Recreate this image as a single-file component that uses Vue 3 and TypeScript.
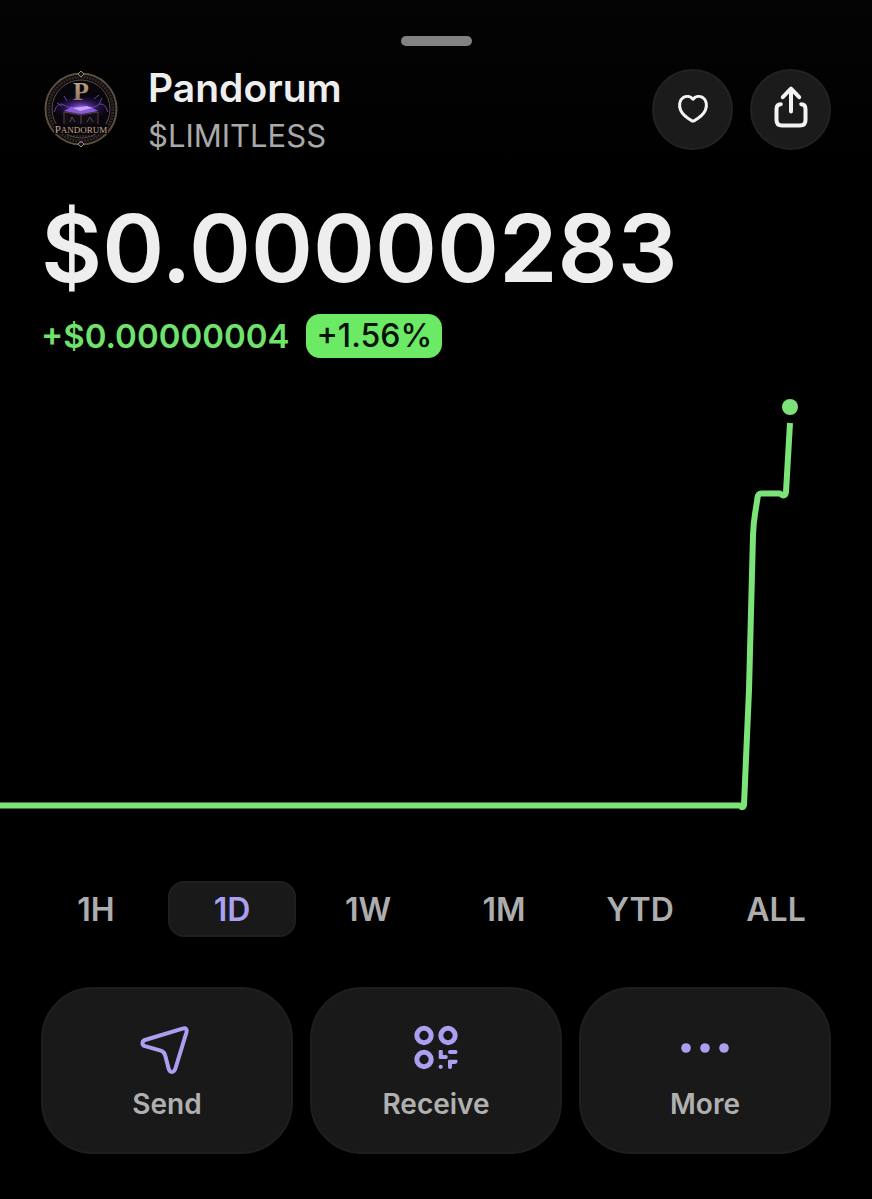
<script setup lang="ts">
import { ref } from 'vue'

const periods: string[] = ['1H', '1D', '1W', '1M', 'YTD', 'ALL']
const selected = ref('1D')
const favourite = ref(false)
</script>

<template>
  <main class="sheet">
    <div class="handle"></div>

    <header class="header">
      <svg class="avatar" viewBox="0 0 76 78" role="img" aria-label="Pandorum logo">
        <defs>
          <radialGradient id="glow">
            <stop offset="0" stop-color="#a070f0" />
            <stop offset="0.4" stop-color="#5a2fa3" stop-opacity="0.75" />
            <stop offset="1" stop-color="#1c0c36" stop-opacity="0" />
          </radialGradient>
          <linearGradient id="gold" x1="0" y1="0" x2="0" y2="1">
            <stop offset="0" stop-color="#c9b08e" />
            <stop offset="1" stop-color="#7d6855" />
          </linearGradient>
        </defs>
        <circle cx="38" cy="39" r="35.5" fill="#0b0910" stroke="#5d4f3e" stroke-width="2" />
        <circle cx="38" cy="39" r="32" fill="none" stroke="#302823" stroke-width="3" stroke-dasharray="2 1" />
        <circle cx="38" cy="39" r="29" fill="#08060d" stroke="#5b4e3d" />
        <ellipse cx="38" cy="38" rx="28" ry="13" fill="url(#glow)" />
        <path d="M11 42q4-11 10-7t8 1M65 42q-4-11-10-7t-8 1M14 33l5 3M59 28l-3 6M21 26l3 5M51 29l5-4" fill="none" stroke="#6940a9" />
        <path d="M21 42l17 3 17-3v13H21z" fill="#110d16" stroke="#54423a" />
        <path d="M38 45v10M27 52l2-5 3 5M44 52l3-5 3 5" fill="none" stroke="#5f4b3c" />
        <path d="M21 41l7-4h20l7 4-17 3z" fill="#8a5bd6" />
        <path d="M30 38l14-2 5 2-12 3z" fill="#c9a5ff" />
        <text x="38" y="30" class="logo-initial">P</text>
        <rect x="11" y="54" width="54" height="10" fill="#0a070e" />
        <text x="38" y="63" class="logo-name"><tspan class="logo-cap">P</tspan>ANDORUM</text>
        <path d="M24 66h28" stroke="#4c4239" stroke-dasharray="2 1" />
        <path d="M38 1l3 3-3 3-3-3zM38 71l3 3-3 3-3-3z" fill="#17120f" stroke="#a48b68" />
        <circle cx="38" cy="72" r="1" fill="#8750d0" />
      </svg>

      <div class="identity">
        <h1 class="name">Pandorum</h1>
        <p class="ticker">$LIMITLESS</p>
      </div>

      <button class="round" type="button" aria-label="Add to favourites" :aria-pressed="favourite" @click="favourite = !favourite">
        <svg class="icon heart" viewBox="0 0 48 48" aria-hidden="true">
          <path d="M24 14.2C21.5 11.2 17.5 10.6 14.3 12.6C10.5 15 9.6 20.5 11.6 25.2C13.6 29.8 18.5 33.3 22.6 35.6Q24 36.4 25.4 35.6C29.5 33.3 34.4 29.8 36.4 25.2C38.4 20.5 37.5 15 33.7 12.6C30.5 10.6 26.5 11.2 24 14.2Z" />
        </svg>
      </button>
      <button class="round" type="button" aria-label="Share">
        <svg class="icon" viewBox="0 0 48 48" aria-hidden="true">
          <path d="M13.8 19.2Q9.5 19.4 9.5 24V35Q9.5 40.5 15 40.5H33Q38.5 40.5 38.5 35V24Q38.5 19.4 34.2 19.2M24 26.5V4M15.8 12.2L24 3.7L32.2 12.2" />
        </svg>
      </button>
    </header>

    <section class="quote" aria-label="Price">
      <p class="price">$0.00000283</p>
      <p class="change">
        <span>+$0.00000004</span>
        <span class="badge">+1.56%</span>
      </p>
    </section>

    <svg class="chart" viewBox="0 0 872 450" role="img" aria-label="Price chart, one day">
      <path d="M0 425.5H740Q743 429 744 425L749 310L753 155Q753.5 143 755 134L757.5 118Q758 113 762 113.5H780Q785 118 786 112L790 43" />
      <circle cx="790" cy="27" r="8" />
    </svg>

    <nav class="periods" aria-label="Chart period">
      <button
        v-for="period in periods"
        :key="period"
        type="button"
        class="period"
        :class="{ active: period === selected }"
        :aria-pressed="period === selected"
        @click="selected = period"
      >{{ period }}</button>
    </nav>

    <div class="actions">
      <button class="action" type="button">
        <svg class="icon" viewBox="0 0 48 48" aria-hidden="true">
          <path d="M2 16L39.5 4.6Q44.7 3.3 43.4 8.5L32.4 44.5C31 49 26.8 49 25.6 44.5L22.2 31.5Q21.3 27.7 17.8 26.7L2 22.2C-1.3 21.1 -1.3 17.2 2 16Z" />
        </svg>
        <span>Send</span>
      </button>
      <button class="action" type="button">
        <svg class="icon" viewBox="0 0 48 48" aria-hidden="true">
          <g class="rings">
            <circle cx="12" cy="11.5" r="7.2" />
            <circle cx="36" cy="11.5" r="7.2" />
            <circle cx="12" cy="35.5" r="7.2" />
          </g>
          <path class="fill" d="M28 26h1.5q1.3 0 1.3 1.3V31h3q2 0 2 2t-2 2H28q-1.3 0-1.3-1.3v-6.4Q26.7 26 28 26ZM38 26h5.5q2 0 2 2t-2 2H38q-2 0-2-2t2-2ZM37.3 35.7H44.500q1 0 1 1.3 0 3-3 3H40v3q0 2-2 2t-2-2v-6q0-1.3 1.3-1.3Z" />
          <circle class="fill" cx="28.7" cy="42.8" r="2.1" />
        </svg>
        <span>Receive</span>
      </button>
      <button class="action" type="button">
        <svg class="icon" viewBox="0 0 48 48" aria-hidden="true">
          <g class="fill">
            <circle cx="5" cy="24" r="4.8" />
            <circle cx="24" cy="24" r="4.8" />
            <circle cx="43" cy="24" r="4.8" />
          </g>
        </svg>
        <span>More</span>
      </button>
    </div>
  </main>
</template>

<style>
body {
  margin: 0;
  background: #000;
}
</style>

<style scoped>
.sheet {
  box-sizing: border-box;
  display: flex;
  flex-direction: column;
  min-height: 100vh;
  padding: 36px 0 46px;
  background: linear-gradient(#040404, #000 168px);
  color: #eee;
  font-family: Inter, "Liberation Sans", sans-serif;
}

h1,
p {
  margin: 0;
}

button {
  box-sizing: border-box;
  padding: 0;
  font: inherit;
  cursor: pointer;
}

.handle {
  width: 71px;
  height: 10px;
  border-radius: 5px;
  background: #828282;
  align-self: center;
}

.header {
  display: flex;
  align-items: center;
  gap: 17px;
  margin-top: 12px;
  padding: 0 41px;
}

.avatar {
  width: 76px;
  height: 78px;
  margin: 0 2px;
  flex: none;
}

.logo-initial {
  fill: url(#gold);
  font: bold 26px "Liberation Serif", serif;
  text-anchor: middle;
}

.logo-name {
  fill: #c4a884;
  font: 9px "Liberation Serif", serif;
  text-anchor: middle;
}

.logo-cap {
  font-size: 11px;
}

.identity {
  flex: 1;
  min-width: 0;
  padding: 6px 0 0 10px;
}

.name {
  font-size: 39px;
  line-height: 48px;
  font-weight: 600;
}

.ticker {
  color: #a9a9a9;
  font-size: 31px;
  line-height: 48px;
}

.round {
  display: grid;
  place-items: center;
  flex: none;
  width: 81px;
  height: 81px;
  border: 2px solid #222;
  border-radius: 50%;
  background: #1b1b1b;
  color: #f3f3f3;
}

.icon {
  display: block;
  width: 48px;
  height: 48px;
  overflow: visible;
  fill: none;
  stroke: currentColor;
  stroke-width: 4;
  stroke-linecap: round;
  stroke-linejoin: round;
}

.heart {
  stroke-width: 3;
}

.rings {
  stroke-width: 5;
}

.fill {
  fill: currentColor;
  stroke: none;
}

.quote {
  padding: 0 41px;
}

.price {
  margin-top: 30px;
  font-size: 94px;
  line-height: 116px;
  font-weight: 600;
}

.change {
  display: flex;
  align-items: center;
  gap: 17px;
  margin-top: 8px;
  color: #6fe36b;
  font-size: 33px;
  line-height: 44px;
  font-weight: 600;
}

.badge {
  padding: 0 10px;
  border-radius: 14px;
  background: #6ce965;
  color: #061206;
  font-size: 32px;
  font-weight: 500;
}

.chart {
  display: block;
  width: 100%;
  margin-top: 22px;
}

.chart path {
  fill: none;
  stroke: #7be377;
  stroke-width: 6;
  stroke-linejoin: round;
}

.chart circle {
  fill: #7be377;
}

.periods {
  display: grid;
  grid-template-columns: repeat(6, 1fr);
  gap: 8px;
  margin-top: 51px;
  padding: 0 32px;
}

.period {
  height: 56px;
  padding-top: 2px;
  border: 2px solid transparent;
  border-radius: 16px;
  background: none;
  color: #adadad;
  font-size: 32px;
  line-height: 40px;
  font-weight: 600;
}

.period.active {
  border-color: #1e1e1e;
  background: #191919;
  color: #ab9ff2;
}

.actions {
  display: grid;
  grid-template-columns: repeat(3, 1fr);
  gap: 17px;
  margin-top: 50px;
  padding: 0 41px;
}

.action {
  display: flex;
  flex-direction: column;
  align-items: center;
  gap: 14px;
  padding: 35px 0 30px;
  border: 2px solid #1e1e1e;
  border-radius: 52px;
  background: #191919;
  color: #ab9ff2;
  font-size: 28px;
  line-height: 36px;
  font-weight: 600;
}

.action span {
  color: #b0b0b0;
}
</style>
